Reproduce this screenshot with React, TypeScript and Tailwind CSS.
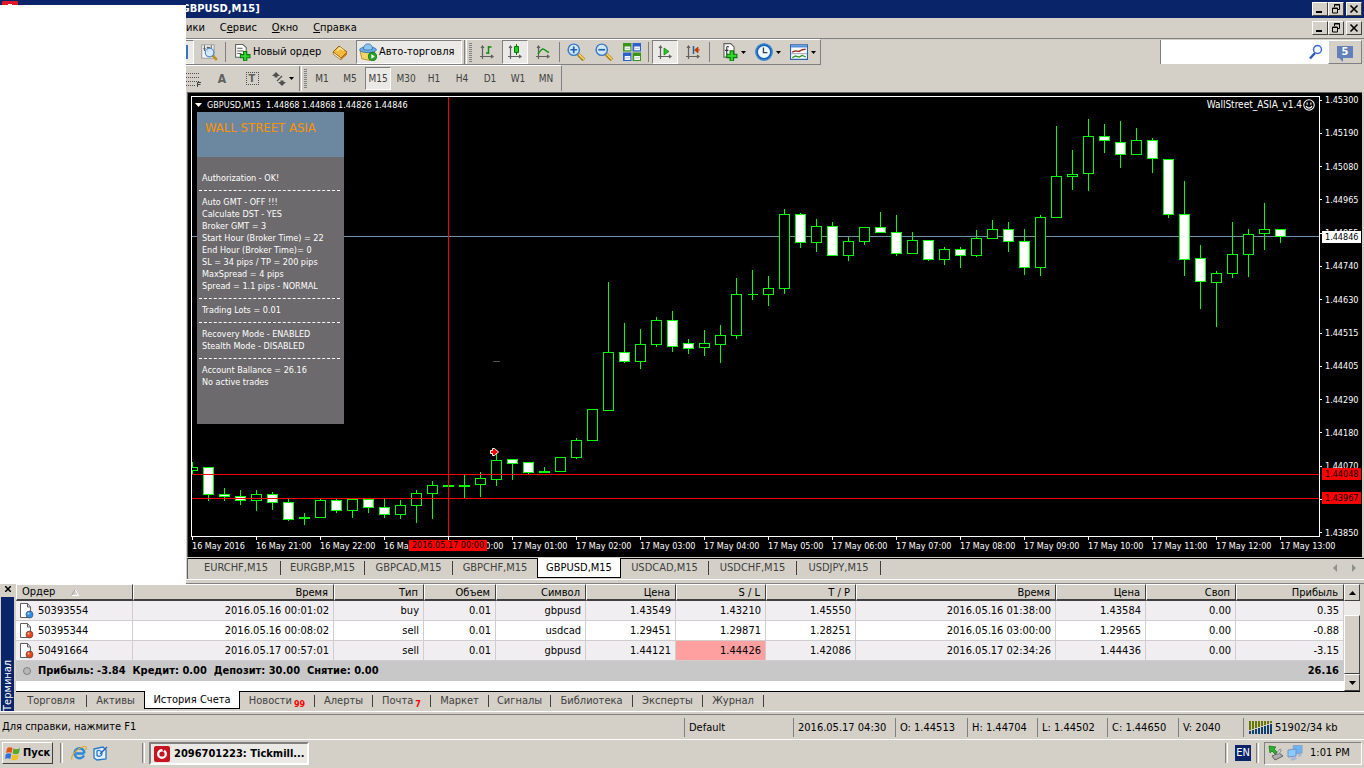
import { ReactNode, useState } from "react";

type Candle = [high: number, top: number, bottom: number, low: number, bear: 0 | 1];

const FIRST_X = 192;
const STEP = 16;
const PLOT_TOP = 97;

const candles: Candle[] = [
  [462, 467, 470, 473, 0], [467, 467, 494, 500, 1], [488, 494, 496, 500, 1], [490, 496, 500, 504, 1],
  [490, 494, 500, 510, 0], [492, 494, 502, 509, 1], [499, 502, 519, 520, 1], [513, 517, 518, 524, 0],
  [499, 500, 517, 517, 0], [499, 500, 510, 512, 1], [499, 499, 510, 517, 0], [499, 499, 507, 512, 1],
  [499, 507, 514, 517, 1], [500, 505, 514, 518, 0], [490, 493, 505, 522, 0], [481, 485, 493, 518, 0],
  [485, 485, 486, 486, 0], [475, 485, 486, 497, 0], [472, 478, 484, 496, 0], [450, 460, 479, 485, 0],
  [459, 459, 463, 479, 1], [462, 462, 472, 473, 1], [467, 471, 472, 472, 0], [457, 457, 471, 471, 0],
  [438, 440, 457, 458, 0], [409, 409, 440, 440, 0], [282, 352, 410, 410, 0], [323, 352, 361, 362, 1],
  [329, 344, 361, 368, 0], [317, 320, 344, 346, 0], [311, 320, 346, 351, 1], [339, 343, 348, 353, 1],
  [330, 343, 347, 355, 0], [325, 335, 344, 362, 0], [278, 294, 335, 338, 0], [270, 294, 294, 299, 0],
  [276, 288, 294, 305, 0], [209, 214, 288, 293, 0], [213, 214, 242, 247, 1], [219, 226, 242, 251, 0],
  [222, 226, 255, 255, 1], [237, 241, 255, 260, 0], [227, 227, 241, 244, 0], [212, 227, 232, 232, 1],
  [215, 232, 253, 255, 1], [232, 240, 253, 253, 0], [240, 240, 259, 260, 1], [247, 249, 259, 264, 0],
  [247, 249, 255, 267, 1], [230, 238, 255, 256, 0], [220, 229, 238, 238, 0], [222, 229, 241, 251, 1],
  [229, 241, 267, 274, 1], [215, 217, 267, 275, 0], [126, 176, 217, 217, 0], [150, 174, 176, 189, 0],
  [119, 136, 173, 190, 0], [124, 136, 140, 152, 1], [121, 142, 154, 167, 1], [128, 140, 154, 154, 0],
  [138, 140, 158, 172, 1], [159, 159, 214, 217, 1], [181, 214, 259, 275, 1], [245, 258, 281, 308, 1],
  [271, 273, 282, 326, 0], [222, 254, 273, 277, 0], [229, 234, 254, 276, 0], [203, 229, 233, 249, 0],
  [229, 229, 236, 242, 1],
];

const prices = [
  "1.45300", "1.45190", "1.45080", "1.44965", "1.44855", "1.44740", "1.44630",
  "1.44515", "1.44405", "1.44290", "1.44180", "1.44070", "1.43960", "1.43850",
];

const times = [
  "16 May 2016", "16 May 21:00", "16 May 22:00", "16 May 23:00", "17 May 00:00", "17 May 01:00",
  "17 May 02:00", "17 May 03:00", "17 May 04:00", "17 May 05:00", "17 May 06:00", "17 May 07:00",
  "17 May 08:00", "17 May 09:00", "17 May 10:00", "17 May 11:00", "17 May 12:00", "17 May 13:00",
];

// null は区切り線
const infoLines: (string | null)[] = [
  "Authorization - OK!", null, "Auto GMT - OFF !!!", "Calculate DST - YES", "Broker GMT = 3",
  "Start Hour (Broker Time) = 22", "End Hour (Broker Time)= 0", "SL = 34 pips / TP = 200 pips",
  "MaxSpread = 4 pips", "Spread = 1.1 pips - NORMAL", null, "Trading Lots = 0.01", null,
  "Recovery Mode - ENABLED", "Stealth Mode - DISABLED", null, "Account Ballance = 26.16", "No active trades",
];

const chartTabs = [
  { name: "EURCHF,M15", width: "w-[89px]" },
  { name: "EURGBP,M15", width: "w-[84px]" },
  { name: "GBPCAD,M15", width: "w-[88px]" },
  { name: "GBPCHF,M15", width: "w-[84px]" },
  { name: "GBPUSD,M15", width: "w-[84px]" },
  { name: "USDCAD,M15", width: "w-[88px]" },
  { name: "USDCHF,M15", width: "w-[88px]" },
  { name: "USDJPY,M15", width: "w-[84px]" },
];

const terminalTabs = [
  { name: "Торговля", width: "w-[71px]" },
  { name: "Активы", width: "w-[57px]" },
  { name: "История Счета", width: "w-[96px]" },
  { name: "Новости", width: "w-[75px]", count: 99 },
  { name: "Алерты", width: "w-[58px]" },
  { name: "Почта", width: "w-[58px]", count: 7 },
  { name: "Маркет", width: "w-[58px]" },
  { name: "Сигналы", width: "w-[62px]" },
  { name: "Библиотека", width: "w-[82px]" },
  { name: "Эксперты", width: "w-[70px]" },
  { name: "Журнал", width: "w-[61px]" },
];

const columns = [
  { name: "Ордер", width: "w-[117px]" },
  { name: "Время", width: "w-[201px]" },
  { name: "Тип", width: "w-[90px]" },
  { name: "Объем", width: "w-[72px]" },
  { name: "Символ", width: "w-[90px]" },
  { name: "Цена", width: "w-[90px]" },
  { name: "S / L", width: "w-[90px]" },
  { name: "T / P", width: "w-[90px]" },
  { name: "Время", width: "w-[200px]" },
  { name: "Цена", width: "w-[90px]" },
  { name: "Своп", width: "w-[90px]" },
  { name: "Прибыль", width: "" },
];

const orders = [
  ["50393554", "2016.05.16 00:01:02", "buy", "0.01", "gbpusd", "1.43549", "1.43210", "1.45550", "2016.05.16 01:38:00", "1.43584", "0.00", "0.35"],
  ["50395344", "2016.05.16 00:08:02", "sell", "0.01", "usdcad", "1.29451", "1.29871", "1.28251", "2016.05.16 03:00:00", "1.29565", "0.00", "-0.88"],
  ["50491664", "2016.05.17 00:57:01", "sell", "0.01", "gbpusd", "1.44121", "1.44426", "1.42086", "2016.05.17 02:34:26", "1.44436", "0.00", "-3.15"],
];

const statusCells = [
  { text: "Default", width: "w-[109px]" },
  { text: "2016.05.17 04:30", width: "w-[102px]" },
  { text: "O: 1.44513", width: "w-[72px]" },
  { text: "H: 1.44704", width: "w-[70px]" },
  { text: "L: 1.44502", width: "w-[70px]" },
  { text: "C: 1.44650", width: "w-[71px]" },
  { text: "V: 2040", width: "w-[65px]" },
];

const raised = "border border-t-white border-l-white border-b-[#404040] border-r-[#404040] bg-[#d4d0c8]";
const pressed = "border border-t-[#808080] border-l-[#808080] border-b-white border-r-white bg-[#ebe9e5]";

const Icon = ({ children, size = "size-4" }: { children: ReactNode; size?: string }) => (
  <svg className={`${size} shrink-0`} viewBox="0 0 16 16" fill="none" aria-hidden="true">
    {children}
  </svg>
);

const Axes = () => (
  <path d="M3.5 2v13M1 12.5h13M2 4l1.500-2L5 4M12 11l2 1.500L12 14" stroke="#606060" strokeWidth="1.200" />
);

const Plus = () => (
  <path d="M9 7h3v3h3v3h-3v3H9v-3H6v-3h3z" fill="#2fd62f" stroke="#087808" strokeWidth="1" />
);

const Lens = ({ plus }: { plus?: boolean }) => (
  <Icon size="size-[18px]">
    <path d="m10 10 5 5" stroke="#a07810" strokeWidth="3.200" />
    <path d="m10.500 10 4.500 4.500" stroke="#f4d060" strokeWidth="1.600" />
    <circle cx="6" cy="6" r="5" fill="#cfe8fa" stroke="#3a78c8" strokeWidth="1.300" />
    <path d={plus ? "M3 6h6M6 3v6" : "M3 6h6"} stroke="#2060b0" strokeWidth="1.500" />
  </Icon>
);

const Caret = () => (
  <svg className="h-[3px] w-[5px] shrink-0" viewBox="0 0 5 3" aria-hidden="true">
    <path d="M0 0h5L2.500 3z" fill="#000" />
  </svg>
);

const Separator = () => (
  <span className="flex h-5 w-[3px] shrink-0 justify-center">
    <span className="w-px bg-[#808080]" />
  </span>
);

// ツールバーの境界 (灰色 + 白)
const Edge = () => <span className="h-full w-[3px] shrink-0 border-r border-l border-l-[#808080] border-r-white" />;

const Grip = () => (
  <span className="h-[19px] w-[3px] shrink-0 bg-[repeating-linear-gradient(#808080_0_1px,#d4d0c8_1px_2px)]" />
);

const ToolButton = ({
  label,
  active,
  width = "w-[26px]",
  children,
}: {
  label: string;
  active?: boolean;
  width?: string;
  children: ReactNode;
}) => (
  <button
    aria-label={label}
    className={`flex h-6 shrink-0 items-center justify-center ${width} ${active ? pressed : ""}`}
  >
    {children}
  </button>
);

const WindowButtons = () => (
  <div className="flex shrink-0 pr-[2px]">
    <button aria-label="Свернуть" className={`flex h-[14px] w-4 items-center justify-center ${raised}`}>
      <svg className="size-[10px]" viewBox="0 0 10 10">
        <path d="M1 8h6" stroke="#000" strokeWidth="2" />
      </svg>
    </button>
    <button aria-label="Восстановить" className={`flex h-[14px] w-4 items-center justify-center ${raised}`}>
      <svg className="size-[10px]" viewBox="0 0 10 10" fill="none" stroke="#000">
        <path d="M3.500 3V.5h5v5H7M3 1h6M1.500 4h5v5h-5zM1 4.500h6" />
      </svg>
    </button>
    <button aria-label="Закрыть" className={`ml-[2px] flex h-[14px] w-4 items-center justify-center ${raised}`}>
      <svg className="size-[10px]" viewBox="0 0 10 10">
        <path d="m1.500 1.500 7 7m0-7-7 7" stroke="#000" strokeWidth="1.600" />
      </svg>
    </button>
  </div>
);

const TitleBar = () => (
  <header className="flex h-[18px] bg-[#0a246a]">
    <div className="flex w-[186px] shrink-0 flex-col">
      <div className="h-[5px] pt-px pl-[2px]">
        <div className="flex h-1 w-4 justify-center rounded-t-[1px] bg-[#e01828] pt-[3px]">
          <span className="h-px w-1 bg-white" />
        </div>
      </div>
      <div className="flex-1 bg-white" />
    </div>
    <h1 className="flex-1 overflow-hidden -indent-[9px] text-[11px] leading-[18px] font-bold text-white">
      [GBPUSD,M15]
    </h1>
    <div className="pt-[2px]">
      <WindowButtons />
    </div>
  </header>
);

const MenuBar = () => (
  <nav className="flex h-5 items-center justify-between">
    <div className="flex gap-[15px]">
      <button>ики</button>
      <button>
        С<u>е</u>рвис
      </button>
      <button>
        <u>О</u>кно
      </button>
      <button>
        <u>С</u>правка
      </button>
    </div>
    <WindowButtons />
  </nav>
);

const MainToolbar = () => (
  <div className="flex h-[27px] items-stretch justify-between border-t border-[#808080]">
    <div className="flex items-center gap-[2px] border-t border-r border-b border-t-white border-r-[#808080] border-b-[#808080] pr-1">
      <span className={`flex h-6 w-2 items-center ${pressed} border-l-0`}>
        <span className="h-[14px] w-[2px] bg-[#3a70c8]" />
      </span>
      <ToolButton label="Тестер стратегий">
        <Icon size="size-[18px]">
          <path d="M1.500 1.500h11v12h-11z" fill="#f4f4f4" stroke="#a0a0a0" />
          <path d="M4 2v5M7 3v5M10 2v4M3 5h2M6 4h3" stroke="#606060" />
          <path d="m11 11 4 4" stroke="#c09020" strokeWidth="2.500" />
          <circle cx="8.500" cy="8.500" r="3.800" fill="#cfe6fa" fillOpacity=".85" stroke="#4a88c8" />
        </Icon>
      </ToolButton>
      <Separator />
      <button className="flex h-6 w-[95px] items-center gap-[2px] pl-[5px] whitespace-nowrap">
        <Icon size="size-[17px]">
          <path d="M1.500.5h7l3 3v9h-10z" fill="#fff" stroke="#606060" />
          <path d="M3 4h5M3 6.500h6M3 9h4" stroke="#606060" />
          <Plus />
        </Icon>
        Новый ордер
      </button>
      <ToolButton label="MetaEditor" width="w-7">
        <Icon>
          <path d="m1 8 6-6 8 6-6 6z" fill="#f2b93a" stroke="#98600c" />
          <path d="m1 8 .5 2.500L9 16v-2z" fill="#fff6d8" stroke="#98600c" strokeWidth=".7" />
          <path d="m9 14 6-6v2.500L9 16z" fill="#c07c14" />
          <path d="m5 7 3-3 3.500 2.500" stroke="#ffe79c" strokeWidth="1.500" />
        </Icon>
      </ToolButton>
      <button className={`flex h-6 w-[106px] items-center gap-[2px] pl-[2px] whitespace-nowrap ${pressed}`}>
        <Icon size="size-[18px]">
          <path d="m1 7 1.500 7 7 1.500L14 8z" fill="#f6d568" stroke="#b8862a" strokeWidth=".8" />
          <ellipse cx="8" cy="6" rx="7.500" ry="2.600" fill="#6cace4" stroke="#2c6cac" strokeWidth=".7" />
          <path d="M4 5.500C4 2 6 .8 8 .8S12 2 12 5.500c-2 1.200-6 1.200-8 0z" fill="#8cc4f0" stroke="#2c6cac" strokeWidth=".7" />
          <circle cx="12" cy="12" r="3.600" fill="#28a828" stroke="#0c700c" strokeWidth=".8" />
          <path d="M11 10v4l3-2z" fill="#fff" />
        </Icon>
        Авто-торговля
      </button>
      <Edge />
      <Grip />
      <ToolButton label="Бары">
        <Icon>
          <Axes />
          <path d="M9.500 2v8M9.500 3h3M7 9h2.500" stroke="#109010" strokeWidth="1.500" />
        </Icon>
      </ToolButton>
      <ToolButton label="Японские свечи" active>
        <Icon>
          <Axes />
          <path d="M9.500 0v11" stroke="#087808" />
          <path d="M7.500 2.500h4v6h-4z" fill="#20d020" stroke="#087808" />
        </Icon>
      </ToolButton>
      <ToolButton label="Линия">
        <Icon>
          <Axes />
          <path d="M3 10c1-1 3-5 5-5 1.500 0 4 3 6 3.500" stroke="#109010" strokeWidth="1.300" />
        </Icon>
      </ToolButton>
      <Separator />
      <ToolButton label="Увеличить">
        <Lens plus />
      </ToolButton>
      <ToolButton label="Уменьшить">
        <Lens />
      </ToolButton>
      <ToolButton label="Окна мозаикой">
        <Icon size="size-[18px]">
          <path d="M0 0h7.500v7.500H0zM8.500 8.500H16V16H8.500z" fill="#3a9418" />
          <path d="M8.500 0H16v7.500H8.500zM0 8.500h7.500V16H0z" fill="#2c60cc" />
          <path d="M1.500 3h5v3.500h-5zM10 3h5v3.500h-5zM1.500 11.500h5V15h-5zM10 11.500h5V15h-5z" fill="#fff" />
          <path d="M2 4.700h4M10.500 4.700h4M2 13.200h4M10.500 13.200h4" stroke="#a8b8c8" strokeWidth=".8" />
        </Icon>
      </ToolButton>
      <Separator />
      <ToolButton label="Автопрокрутка" active>
        <Icon>
          <Axes />
          <path d="m7 4 5 3.500L7 11z" fill="#28c828" stroke="#087808" strokeWidth=".7" />
        </Icon>
      </ToolButton>
      <ToolButton label="Сдвиг графика">
        <Icon>
          <Axes />
          <path d="M8.500 2v8" stroke="#2060a0" strokeWidth="1.500" />
          <path d="M15 6h-3m-2.500 0L13 3v6z" stroke="#c03808" fill="#c03808" strokeWidth=".8" />
        </Icon>
      </ToolButton>
      <Separator />
      <button aria-label="Индикаторы" className="flex h-6 w-[33px] items-center justify-end gap-[3px]">
        <Icon size="size-[18px]">
          <path d="M3.500.5h6l3 3v9h-9z" fill="#fff" stroke="#606060" />
          <path d="M8 3.500c-2-1-2 0-2 1.500v5M4.500 6.500h3" stroke="#303030" />
          <Plus />
        </Icon>
        <Caret />
      </button>
      <button aria-label="Периоды" className="flex h-6 w-[33px] items-center justify-end gap-[3px]">
        <Icon size="size-[18px]">
          <circle cx="8" cy="8" r="6.600" fill="#eef6fe" stroke="#1860b8" strokeWidth="2.400" />
          <circle cx="8" cy="8" r="7.200" stroke="#5aa8ec" strokeWidth=".6" />
          <path d="M7.500 4v4.500H11" stroke="#404040" strokeWidth="1.200" />
        </Icon>
        <Caret />
      </button>
      <button aria-label="Шаблоны" className="flex h-6 w-[33px] items-center justify-end gap-[3px]">
        <Icon size="size-[18px]">
          <path d="M.5 1.500h15v13H.5z" fill="#fff" stroke="#2c60a8" />
          <path d="M1 2h14v2H1z" fill="#5090d8" />
          <path d="m2 8 3-1 3 .5L11 6l3-.500" stroke="#a02818" strokeWidth="1.200" />
          <path d="M1 9.500h14" stroke="#8098b8" strokeWidth=".8" />
          <path d="m2 13 3-1.500 3 1 3-1.500 3 1.500" stroke="#209020" />
        </Icon>
        <Caret />
      </button>
    </div>
    <div className="flex items-start pt-px">
      <label className="flex h-6 w-[168px] items-center border-l border-[#808080] bg-white pr-1">
        <input aria-label="Поиск" className="h-full min-w-0 flex-1 px-1 outline-none" />
        <Icon>
          <path d="m7 9-5 5.500" stroke="#2858c8" strokeWidth="2.400" />
          <circle cx="9.500" cy="5.500" r="4" fill="#f4f8ff" stroke="#3868d0" strokeWidth="1.400" />
        </Icon>
      </label>
      <button
        aria-label="Сообщения: 5"
        className="mr-[2px] flex h-6 w-[34px] items-center justify-center border border-t-white border-l-white border-r-[#808080] border-b-[#808080]"
      >
        <span className="relative flex h-3 w-4 items-center justify-center bg-[#6480b8] text-[11px] font-bold text-white">
          5
          <span className="absolute top-full left-[2px] border-t-[4px] border-l-[4px] border-t-[#6480b8] border-l-transparent" />
        </span>
      </button>
    </div>
  </div>
);

const PeriodToolbar = () => {
  const [period, setPeriod] = useState("M15");
  return (
    <div className="flex h-[26px] text-[10px] text-[#404040]">
      <div className="flex items-center gap-[2px] border-t border-r border-t-white border-r-[#808080] pr-[2px]">
        <button aria-label="Фибоначчи" className="w-5">
          <Icon>
            <path d="M0 2.500h14M0 6.500h14M0 10.500h14M0 14.500h9" stroke="#505050" strokeDasharray="1 1" />
            <path d="M11.500 16v-4.500H15M11.500 13.500h3" stroke="#404040" />
          </Icon>
        </button>
        <button className="w-7 text-[12px] font-bold text-[#606060]">A</button>
        <button className="flex w-7 justify-center">
          <span className="flex size-[13px] items-center justify-center border border-dotted border-[#505050] text-[11px] font-bold text-[#606060]">
            T
          </span>
        </button>
        <button aria-label="Стрелки" className="flex w-[29px] items-center justify-center gap-[2px]">
          <Icon>
            <path d="M5 1 1 5h2.500v1.500h3V5H9zM11 15l-4-4h2.500V9.500h3V11H15z" fill="#505050" />
            <path d="m6 10 5-5" stroke="#505050" strokeWidth="1.300" />
          </Icon>
          <Caret />
        </button>
        <Edge />
        <Grip />
        {["M1", "M5", "M15", "M30", "H1", "H4", "D1", "W1", "MN"].map((name) => (
          <button
            key={name}
            onClick={() => setPeriod(name)}
            className={`flex h-[23px] w-[26px] items-center justify-center ${name === period ? pressed : ""}`}
          >
            {name}
          </button>
        ))}
      </div>
    </div>
  );
};

const Candles = () => (
  <>
    {candles.map(([high, top, bottom, low, bear], i) => {
      const x = i * STEP;
      return (
        <g key={i} stroke="#00ff00" shapeRendering="crispEdges">
          <path d={`M${x + 0.5} ${high - PLOT_TOP}V${low + 1 - PLOT_TOP}`} />
          <path
            d={`M${x - 4.5} ${top + 0.5 - PLOT_TOP}h10v${bottom - top}h-10z`}
            strokeLinecap="square"
            fill={bear ? "#fff" : "#000"}
          />
        </g>
      );
    })}
  </>
);

const InfoPanel = () => (
  <div className="absolute top-[15px] left-[5px] h-[312px] w-[147px] bg-[#6c6a6c]">
    <div className="h-[45px] bg-[#6c88a0] px-2 pt-2 text-[13px] leading-4 whitespace-nowrap text-[#ff9000]">WALL STREET ASIA</div>
    <div className="pt-[15px] pl-[5px] leading-3 whitespace-nowrap">
      {infoLines.map((line, i) =>
        line === null ? (
          <div key={i} className="mr-1 -ml-[3px] flex h-3 items-center">
            <span className="w-full border-t border-dashed border-white" />
          </div>
        ) : (
          <p key={i}>{line}</p>
        )
      )}
    </div>
  </div>
);

const Chart = () => (
  <section className="ml-px border-t border-l border-[#606060] bg-black pl-[3px] text-[9px] leading-3 text-white">
    <div className="flex pt-[3px]">
      <div className="relative h-[441px] flex-1 overflow-hidden border border-white">
        <svg className="absolute inset-0 size-full" role="img" aria-label="GBPUSD,M15">
          <path d="M0 139.500h1400" stroke="#7090a8" />
          <Candles />
          <g fill="#ff0000" shapeRendering="crispEdges">
            <rect y="377" width="100%" height="1" />
            <rect y="401" width="100%" height="1" />
            <rect x={16 * STEP} width="1" height="100%" />
            <rect x={493 - FIRST_X} y="264" width="7" height="1" fill="#505050" />
          </g>
          <path d="M298.500 353.500h2v-2h2l4 3.500-4 3.500h-2v-2h-2z" fill="#f00" stroke="#fff" />
        </svg>
        <div className="relative flex justify-between pt-[2px] pr-1 pl-[3px]">
          <span className="flex items-center whitespace-pre">
            <svg className="mr-[5px] h-1 w-[7px]" viewBox="0 0 7 4">
              <path d="M0 0h7L3.500 4z" fill="#fff" />
            </svg>
            {"GBPUSD,M15  1.44868 1.44868 1.44826 1.44846"}
          </span>
          <span className="flex items-center gap-px text-[10px]">
            WallStreet_ASIA_v1.4
            <Icon size="size-3">
              <circle cx="8" cy="8" r="7" stroke="#fff" strokeWidth="1.400" />
              <path d="M5.500 4.500v3M10.500 4.500v3M4 9.500c2 3.500 6 3.500 8 0" stroke="#fff" strokeWidth="1.500" />
            </Icon>
          </span>
        </div>
        <InfoPanel />
      </div>
      <div className="relative -mt-[2px] -mb-[2px] flex w-[42px] flex-col justify-between">
        {prices.map((price) => (
          <span key={price} className="flex items-center gap-[3px]">
            <span className="h-px w-[2px] bg-white" />
            {price}
          </span>
        ))}
        <span className="absolute top-[137px] right-px left-[2px] bg-white pl-[3px] text-black">1.44846</span>
        <span className="absolute top-[374px] right-px left-[2px] bg-[#ff0000] pl-[3px] text-black">1.44048</span>
        <span className="absolute top-[398px] right-px left-[2px] bg-[#ff0000] pl-[3px] text-black">1.43967</span>
      </div>
    </div>
    <div className="relative flex h-5 pl-px">
      {times.map((time) => (
        <span key={time} className="flex w-16 shrink-0 flex-col whitespace-nowrap">
          <span className="h-[3px] w-px bg-white" />
          {time}
        </span>
      ))}
      <span className="absolute top-[3px] left-[218px] w-[78px] bg-[#ff0000] text-center leading-[11px] text-black">
        2016.05.17 00:00
      </span>
    </div>
  </section>
);

const ChartTabs = () => {
  const [active, setActive] = useState("GBPUSD,M15");
  return (
    <div className="ml-px border-l border-[#606060]">
      <div className="mt-px flex h-[21px] items-start justify-between border-t border-black text-[#404040]">
        <div className="flex pl-1">
          {chartTabs.map(({ name, width }) => (
            <button
              key={name}
              onClick={() => setActive(name)}
              className={`flex h-[18px] items-center justify-center ${width} ${
                name === active ? "-mt-px h-[20px] border border-t-0 border-black bg-white text-black" : ""
              }`}
            >
              <span className="flex-1">{name}</span>
              {name !== active && name !== "GBPCHF,M15" && <span className="h-[14px] w-px bg-[#404040]" />}
            </button>
          ))}
        </div>
        <div className="flex gap-[15px] pt-[5px] pr-2">
          <button aria-label="Назад" className="border-y-[4px] border-r-[4px] border-y-transparent border-r-[#909090]" />
          <button aria-label="Вперёд" className="border-y-[4px] border-l-[4px] border-y-transparent border-l-[#909090]" />
        </div>
      </div>
    </div>
  );
};

const OrderIcon = ({ color }: { color: string }) => (
  <Icon>
    <path d="M2.500.5h7l3 3.500v10.500h-10z" fill="#fff" stroke="#606060" />
    <path d="M9.500.5V4h3" stroke="#606060" />
    <circle cx="11.500" cy="11.500" r="3.500" fill={color} stroke="#404040" strokeWidth=".6" />
    <circle cx="10.500" cy="10.500" r="1" fill="#fff" fillOpacity=".7" />
  </Icon>
);

const History = () => (
  <table className="w-full table-fixed border-separate border-spacing-0 text-right">
    <thead>
      <tr className="h-[17px]">
        {columns.map(({ name, width }, i) => (
          <th key={i} className={`p-0 font-normal ${width}`}>
            <div className={`h-[17px] border-b-2 pr-[5px] leading-4 ${raised} ${i === 0 ? "flex items-center gap-4 pl-[5px]" : ""}`}>
              {name}
              {i === 0 && (
                <svg className="h-[7px] w-2" viewBox="0 0 8 7" fill="none">
                  <path d="M.5 6.500h7L4 .5z" stroke="#fff" />
                  <path d="M.5 6.500 4 .5" stroke="#909090" />
                </svg>
              )}
            </div>
          </th>
        ))}
      </tr>
    </thead>
    <tbody>
      {orders.map((order, row) => (
        <tr key={order[0]} className={`h-5 ${row % 2 ? "bg-white" : "bg-[#f1eef1]"}`}>
          {order.map((cell, i) => (
            <td
              key={i}
              className={`border-r border-b border-[#d0ccd0] p-0 pr-[4px] leading-[19px] ${row === 2 && i === 6 ? "bg-[#ffa0a0]" : ""}`}
            >
              {i === 0 ? (
                <span className="flex items-center gap-[4px] pl-[2px]">
                  <OrderIcon color={order[2] === "buy" ? "#2c90e8" : "#e84818"} />
                  {cell}
                </span>
              ) : (
                cell
              )}
            </td>
          ))}
        </tr>
      ))}
      <tr className="h-5 bg-[#c9c8c9] font-bold">
        <td colSpan={11} className="p-0 text-left">
          <span className="flex items-center gap-[7px] pl-[7px] whitespace-pre">
            <span className="size-2 rounded-full border border-[#808080] bg-[#b8b8b8]" />
            {"Прибыль: -3.84  Кредит: 0.00  Депозит: 30.00  Снятие: 0.00"}
          </span>
        </td>
        <td className="p-0 pr-[5px]">26.16</td>
      </tr>
    </tbody>
  </table>
);

const Scrollbar = () => (
  <div className="flex w-4 shrink-0 flex-col bg-[#eceae6]">
    <button aria-label="Вверх" className={`flex h-[17px] items-center justify-center ${raised}`}>
      <svg className="h-1 w-[7px]" viewBox="0 0 7 4">
        <path d="M0 4h7L3.500 0z" />
      </svg>
    </button>
    <div className="flex flex-1 flex-col pt-[14px]">
      <div className={`flex-1 ${raised}`} />
    </div>
    <button aria-label="Вниз" className={`flex h-[17px] items-center justify-center ${raised}`}>
      <svg className="h-1 w-[7px]" viewBox="0 0 7 4">
        <path d="M0 0h7L3.500 4z" />
      </svg>
    </button>
  </div>
);

const Terminal = () => {
  const [active, setActive] = useState("История Счета");
  return (
    <section className="flex border-b border-white">
      <div className="mr-px flex w-[15px] shrink-0 flex-col items-center">
        <button aria-label="Закрыть терминал" className="flex h-[13px] items-start pt-[2px]">
          <svg className="size-[6px]" viewBox="0 0 6 6">
            <path d="m0 0 6 6m0-6L0 6" stroke="#000" strokeWidth="1.500" />
          </svg>
        </button>
        <h2 className="mr-px ml-px w-[13px] flex-1 rotate-180 bg-[#0a246a] leading-[13px] text-white [writing-mode:vertical-rl]">
          Терминал
        </h2>
      </div>
      <div className="min-w-0 flex-1">
        <div className="mr-1 flex border-b border-black bg-white">
          <div className="h-[107px] flex-1">
            <History />
          </div>
          <Scrollbar />
        </div>
        <div className="flex h-[19px] items-start text-[#404040]">
          {terminalTabs.map(({ name, width, count }) => (
            <button
              key={name}
              onClick={() => setActive(name)}
              className={`flex items-center justify-center ${width} ${
                name === active ? "-mt-px h-[18px] border border-t-0 border-black bg-white text-black" : "h-[17px]"
              }`}
            >
              <span className="flex h-[14px] flex-1 justify-center gap-[2px] whitespace-nowrap">
                {name}
                {count && <span className="pt-1 text-[9px] leading-3 font-bold text-[#ff0000]">{count}</span>}
              </span>
              {name !== active && name !== "Активы" && <span className="h-3 w-px bg-[#404040]" />}
            </button>
          ))}
        </div>
      </div>
    </section>
  );
};

const StatusBar = () => (
  <footer className="mt-[2px] flex h-[26px] items-center border-t border-b border-t-[#808080] border-b-white whitespace-nowrap">
    <span className="flex-1 pl-[2px]">Для справки, нажмите F1</span>
    {statusCells.map(({ text, width }) => (
      <span key={text} className={`shrink-0 border-l border-[#808080] pt-px pl-1 leading-[18px] ${width}`}>
        {text}
      </span>
    ))}
    <span className="flex w-[121px] shrink-0 items-center gap-[3px] border-l border-[#808080] pt-px pl-[5px] leading-[18px]">
      <svg className="h-[13px] w-[23px]" viewBox="0 0 23 13" shapeRendering="crispEdges">
        {[0, 1, 2, 3, 4, 5, 6, 7].map((i) => (
          <g key={i}>
            <rect x={i * 3} width="2" height={9 - i} fill="#687800" />
            <rect x={i * 3} y={10 - i} width="2" height={3 + i} fill="#104070" />
          </g>
        ))}
      </svg>
      51902/34 kb
    </span>
  </footer>
);

const Divider = () => <span className="h-5 w-[3px] shrink-0 border-r border-l border-l-[#808080] border-r-white" />;

const TaskBar = () => (
  <div className="flex h-7 items-start pt-[2px] pr-[2px] pl-[2px]">
    <button className={`flex h-[22px] w-[51px] items-center gap-[2px] pl-[2px] font-bold ${raised}`}>
      <Icon>
        <path d="M2 3.500C4 2 5.500 2 7.500 3L6.500 8C5 7 3 7 1 8z" fill="#e85020" />
        <path d="M8.500 3.500c2 1 4 1 6.500-.500L14 8c-2 1.500-4 1.500-6.500.5z" fill="#58a828" />
        <path d="M.8 9C3 8 5 8 6.300 9l-1 5C3.500 13 2 13 0 14z" fill="#3070d8" />
        <path d="M7.300 9.500c2 1 4 1 6.500-.500l-1 5c-2.500 1.500-4.500 1.500-6.500.5z" fill="#f0c020" />
      </Icon>
      Пуск
    </button>
    <div className="flex h-[22px] items-center pl-[7px]">
      <Divider />
    </div>
    <a href="#ie" aria-label="Internet Explorer" className="ml-2 flex h-[22px] items-center">
      <Icon>
        <path d="M13.500 8.500H5M13 10.500A5 5 0 1 1 13.500 8" stroke="#2888dc" strokeWidth="2.400" />
        <path d="M1 14.500C-1 11 8 1.500 14 1.500c2 0 1.500 2 .5 3.500" stroke="#e0a820" strokeWidth="1.200" />
      </Icon>
    </a>
    <a href="#mail" aria-label="Outlook Express" className="ml-[5px] flex h-[22px] items-center">
      <Icon>
        <path d="m2 4 9-2 3 3v9l-9 1-3-2z" fill="#e4f2fe" stroke="#2878c8" strokeWidth="1.300" />
        <path d="M5 6c2-1.500 5 0 5 2.500S7 12 5 10.500z" stroke="#2878c8" strokeWidth="1.300" />
        <path d="m8 9 7-7" stroke="#3060b0" strokeWidth="1.500" />
      </Icon>
    </a>
    <div className="flex h-[22px] items-center pl-[34px]">
      <Divider />
    </div>
    <button className={`ml-1 flex h-[23px] w-[160px] items-center gap-1 border-2 pl-[3px] font-bold whitespace-nowrap ${pressed}`}>
      <Icon>
        <rect width="16" height="16" rx="2" fill="#c81420" />
        <circle cx="8" cy="8" r="3.800" stroke="#fff" strokeWidth="2.400" />
        <path d="m8 2 3 1.500L9 6z" fill="#c81420" />
      </Icon>
      2096701223: Tickmill...
    </button>
    <div className="ml-auto flex h-[22px] items-center gap-[5px]">
      <Divider />
      <span className="ml-[2px] bg-[#0a246a] px-[1px] leading-4 text-white">EN</span>
      <Divider />
      <div className="flex h-[23px] w-[98px] items-center gap-[3px] border border-t-[#808080] border-l-[#808080] border-r-white border-b-white pl-[3px]">
        <Icon>
          <path d="m4 11 7-3 4 3-8 4z" fill="#b0b0b0" stroke="#606060" />
          <path d="m8 9 4-5 1.500 1L11 9z" fill="#d8d8d8" stroke="#707070" strokeWidth=".7" />
          <path d="m1 1 7 1-2 2 3 3-2 2-3-3-2 2z" fill="#30b030" stroke="#107010" strokeWidth=".7" />
        </Icon>
        <Icon>
          <path d="M6 .8 15 0v8l-8 1z" fill="#68b4f4" stroke="#88a0c8" />
          <path d="m1 5 8-1v7l-8 1z" fill="#88ccff" stroke="#7890c0" />
          <path d="m3 13 6-1 1 2-5 2zM11 9l3 0 1 2-4 1z" fill="#a8b8d8" />
        </Icon>
        <time className="ml-1 whitespace-nowrap">1:01 PM</time>
      </div>
    </div>
  </div>
);

export default function App() {
  return (
    <div className="flex min-h-screen flex-col bg-[#d4d0c8] font-['DejaVu_Sans_Condensed','Noto_Sans',sans-serif] text-[11px] leading-[14px] text-black">
      <TitleBar />
      <div className="flex">
        <aside className="w-[186px] shrink-0 bg-white" />
        <main className="min-w-0 flex-1">
          <MenuBar />
          <MainToolbar />
          <PeriodToolbar />
          <div className="pt-px pr-[2px]">
            <Chart />
          </div>
          <ChartTabs />
          <div className="h-[5px] border-t border-b border-t-white border-b-[#808080]" />
        </main>
      </div>
      <Terminal />
      <StatusBar />
      <TaskBar />
    </div>
  );
}
